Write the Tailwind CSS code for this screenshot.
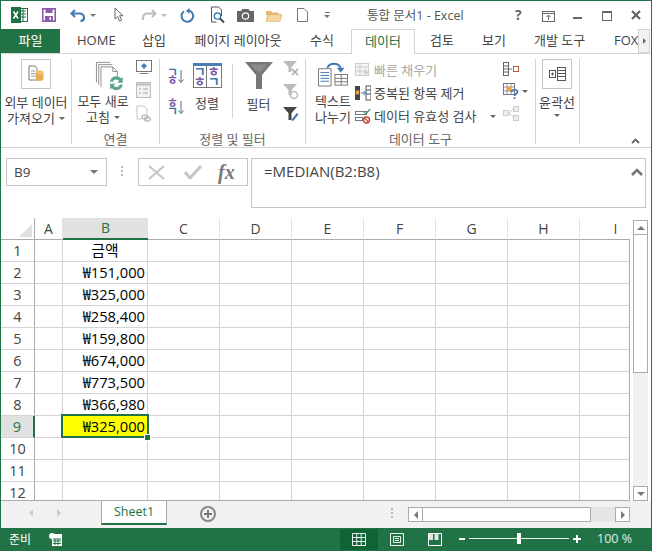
<!DOCTYPE html>
<html lang="ko">
<head>
<meta charset="UTF-8">
<title>통합 문서1 - Excel</title>
<script src="https://cdn.jsdelivr.net/npm/@tailwindcss/browser@4"></script>
</head>
<body class="w-[652px] h-[551px] overflow-hidden bg-white font-['Open_Sans','Noto_Sans_CJK_KR',sans-serif] text-[#444]">
<div class="w-full h-full flex flex-col border-x border-[#217346] border-t">

  <!-- title bar -->
  <div class="h-[28px] flex items-center shrink-0 relative">
    <svg class="ml-[10px] w-[17px] h-[16px]" viewBox="0 0 17 16"><rect x="6" y="1.5" width="10.5" height="13" fill="#fff" stroke="#217346"/><path d="M9 4h6M9 7h6M9 10h6M12 2v12" stroke="#217346"/><rect x="0" y="0" width="10" height="16" fill="#1e7145"/><path d="M2.5 4.5l4.5 7M7 4.5l-4.5 7" stroke="#fff" stroke-width="1.6"/></svg>
    <svg class="ml-[14px] w-[14px] h-[14px]" viewBox="0 0 14 14"><rect x=".8" y=".8" width="12.4" height="12.4" fill="none" stroke="#8a5ba6" stroke-width="1.6"/><rect x="3.5" y="1" width="7" height="4" fill="#8a5ba6"/><rect x="3" y="8" width="8" height="5" fill="#8a5ba6"/><rect x="7.5" y="9" width="1.5" height="3" fill="#fff"/></svg>
    <svg class="ml-[14px] w-[16px] h-[14px]" viewBox="0 0 16 14"><path d="M5 2L1.500 5.500 5 9" fill="none" stroke="#3f78b3" stroke-width="2"/><path d="M2 5.500h8a4 4 0 0 1 4 4c0 2-1.500 3.500-3.500 3.500" fill="none" stroke="#3f78b3" stroke-width="2.200"/></svg>
    <span class="ml-[4px] w-0 h-0 border-x-[3px] border-x-transparent border-t-[3px] border-t-[#777]"></span>
    <svg class="ml-[18px] w-[10px] h-[16px]" viewBox="0 0 10 16"><path d="M1 1v11l2.600-2.400L5.600 14l2-1-2-4.300H9z" fill="#fff" stroke="#666"/></svg>
    <svg class="ml-[17px] w-[16px] h-[14px]" viewBox="0 0 16 14"><path d="M11 2l3.500 3.500L11 9" fill="none" stroke="#bdbdbd" stroke-width="2"/><path d="M14 5.500H6a4 4 0 0 0-4 4V12" fill="none" stroke="#bdbdbd" stroke-width="2.200"/></svg>
    <span class="ml-[4px] w-0 h-0 border-x-[3px] border-x-transparent border-t-[3px] border-t-[#bbb]"></span>
    <svg class="ml-[13px] w-[15px] h-[15px]" viewBox="0 0 15 15"><path d="M4 3.200A5.800 5.800 0 1 0 9 2.400" fill="none" stroke="#3f78b3" stroke-width="2"/><path d="M9.500 0v6L6 3z" fill="#3f78b3"/></svg>
    <svg class="ml-[15px] w-[15px] h-[18px]" viewBox="0 0 15 18"><path d="M1.500 1h7l3 3v6M1.500 1v15h5" fill="none" stroke="#555"/><circle cx="7.500" cy="10" r="3.200" fill="#fff" stroke="#2f6f9f" stroke-width="1.300"/><path d="M10 12.500l4 4" stroke="#444" stroke-width="1.800"/></svg>
    <svg class="ml-[12px] w-[17px] h-[14px]" viewBox="0 0 17 14"><path d="M0 3h4l1.500-2h6L13 3h4v11H0z" fill="#666"/><circle cx="8.500" cy="8" r="3.200" fill="#666" stroke="#fff" stroke-width="1.200"/></svg>
    <svg class="ml-[12px] w-[16px] h-[13px]" viewBox="0 0 16 13"><path d="M0 2h5l1.500 1.500h6V6H0z" fill="#e5b877"/><path d="M0 13l2-7.500h14l-2.500 7.500z" fill="#f3d6a0" stroke="#e5b877"/></svg>
    <svg class="ml-[15px] w-[11px] h-[14px]" viewBox="0 0 11 14"><path d="M.5.500h6.500l3.500 3.500v9.500H.5z" fill="#fff" stroke="#777"/></svg>
    <span class="ml-[16px] flex flex-col items-center gap-[2px]"><span class="w-[5px] h-px bg-[#777]"></span><span class="w-0 h-0 border-x-[3px] border-x-transparent border-t-[3px] border-t-[#777]"></span></span>
    <span class="absolute left-[366px] top-[5px] text-[12.500px] leading-[20px] text-[#555]">통합 문서1 - Excel</span>
    <span class="absolute left-[514px] top-[4px] text-[14px] leading-[20px] font-bold text-[#666]">?</span>
    <svg class="absolute left-[541px] top-[10px] w-[13px] h-[11px]" viewBox="0 0 13 11"><rect x=".5" y=".5" width="12" height="10" fill="none" stroke="#666"/><path d="M1 2.500h11M6.500 9V4.500M4.500 6l2-2 2 2" fill="none" stroke="#666"/></svg>
    <span class="absolute left-[572px] top-[16px] w-[9px] h-[2px] bg-[#666]"></span>
    <span class="absolute left-[601px] top-[10px] w-[10px] h-[10px] border border-t-2 border-[#666]"></span>
    <svg class="absolute left-[630px] top-[9px] w-[10px] h-[10px]" viewBox="0 0 10 10"><path d="M1 1l8 8M9 1l-8 8" stroke="#666" stroke-width="2.200"/></svg>
  </div>

  <!-- tabs -->
  <div class="h-[25px] flex shrink-0 border-b border-[#d4d4d4] text-[13px] leading-[23px] text-[#444] whitespace-nowrap relative">
    <div class="w-[59px] h-[24px] bg-[#217346] text-white text-center">파일</div>
    <div class="ml-[17px] w-[36px] text-center">HOME</div>
    <div class="ml-[29px] w-[24px] text-center">삽입</div>
    <div class="ml-[28px] w-[88px] text-center">페이지 레이아웃</div>
    <div class="ml-[28px] w-[24px] text-center">수식</div>
    <div class="ml-[17px] w-[64px] h-[25px] bg-white border border-b-0 border-[#d4d4d4] text-[#217346] text-center">데이터</div>
    <div class="ml-[15px] w-[24px] text-center">검토</div>
    <div class="ml-[28px] w-[24px] text-center">보기</div>
    <div class="ml-[28px] w-[51px] text-center">개발 도구</div>
    <div class="ml-[29px] w-[22px]">FOX</div>
    <div class="absolute left-[637px] top-0 w-[12px] h-[24px] bg-[#f3f3f3] border border-[#d4d4d4] flex items-center justify-center"><span class="w-0 h-0 border-y-[3px] border-y-transparent border-l-[3px] border-l-[#666]"></span></div>
  </div>

  <!-- ribbon -->
  <div class="h-[94px] flex shrink-0 border-b border-[#d4d4d4] text-[13px] leading-[16px] text-[#444] pt-[5px] relative whitespace-nowrap">
    <!-- external data -->
    <div class="w-[71px] h-[85px] border-r border-[#d4d4d4] flex flex-col items-center shrink-0">
      <div class="w-[30px] h-[30px] border border-[#c6c6c6] flex items-center justify-center">
        <svg class="w-[16px] h-[18px]" viewBox="0 0 16 18"><path d="M1 1h6l2 2v12H1z" fill="#fff" stroke="#777"/><path d="M3 6h4M3 8.500h4M3 11h4" stroke="#999"/><ellipse cx="11.500" cy="7" rx="4" ry="1.800" fill="#f0c36d"/><path d="M7.500 7v7c0 1 1.800 2 4 2s4-1 4-2V7c0 1-1.800 2-4 2s-4-1-4-2z" fill="#e5ae4f"/></svg>
      </div>
      <div class="mt-[5px] text-center">외부 데이터</div>
      <div class="flex items-center gap-[4px]">가져오기<span class="w-0 h-0 border-x-[3px] border-x-transparent border-t-[3px] border-t-[#666]"></span></div>
    </div>
    <!-- connections -->
    <div class="w-[88px] h-[85px] border-r border-[#d4d4d4] flex flex-col shrink-0">
      <div class="flex h-[66px] shrink-0">
        <div class="w-[62px] flex flex-col items-center">
          <svg class="mt-[2px] ml-[14px] w-[33px] h-[32px]" viewBox="0 0 33 32"><path d="M1 23.500V1.500h15M3.500 26V4h15M6 28.500V6.500h13l5 5v7" fill="#fff" stroke="#888"/><path d="M19 6.500v5h5" fill="none" stroke="#888"/><path d="M16 23a7 7 0 0 1 12-4l2-1v6h-6l2-2a4 4 0 0 0-7 1zM30 26a7 7 0 0 1-12 4l-2 1v-6h6l-2 2a4 4 0 0 0 7-1z" fill="#5fa58a"/></svg>
          <div class="mt-[3px]">모두 새로</div>
          <div class="flex items-center gap-[4px]">고침<span class="w-0 h-0 border-x-[3px] border-x-transparent border-t-[3px] border-t-[#666]"></span></div>
        </div>
        <div class="ml-[2px] pt-[1px] flex flex-col gap-[7px]">
          <svg class="w-[16px] h-[15px]" viewBox="0 0 16 15"><rect x=".5" y=".5" width="15" height="11" fill="#fff" stroke="#777"/><path d="M4 13.500h8" stroke="#777"/><path d="M8 3l3 3-3 3-3-3z" fill="#4a7fb5"/></svg>
          <svg class="w-[15px] h-[16px]" viewBox="0 0 15 16"><rect x=".5" y=".5" width="14" height="15" fill="#f2f2f2" stroke="#bbb"/><path d="M1 2.500h13" stroke="#bbb" stroke-width="2"/><path d="M7 7h5M7 11h5M3 7h2M3 11h2" stroke="#aaa"/></svg>
          <svg class="w-[15px] h-[17px]" viewBox="0 0 15 17"><path d="M1 1h7l3 3v5M1 1v13h5" fill="#fff" stroke="#c4c4c4"/><ellipse cx="9" cy="12" rx="3" ry="2" fill="none" stroke="#bbb" stroke-width="1.400"/><ellipse cx="11.500" cy="14" rx="3" ry="2" fill="none" stroke="#bbb" stroke-width="1.400"/></svg>
        </div>
      </div>
      <div class="mt-[6px] text-center text-[#666]">연결</div>
    </div>
    <!-- sort & filter -->
    <div class="w-[146px] h-[85px] border-r border-[#d4d4d4] flex flex-col shrink-0">
      <div class="flex h-[66px] shrink-0">
        <div class="ml-[7px] mt-[9px] w-[18px] shrink-0 flex flex-col gap-[14px]">
          <div class="flex items-center h-[17px]">
            <div class="flex flex-col text-[12px] leading-[8px] font-bold"><span class="text-[#3f78b3]">ㄱ</span><span class="text-[#7a5aa6]">ㅎ</span></div>
            <svg class="w-[6px] h-[15px]" viewBox="0 0 6 15"><path d="M3 1v12M.5 10.500L3 13.500l2.500-3" fill="none" stroke="#666"/></svg>
          </div>
          <div class="flex items-center h-[17px]">
            <div class="flex flex-col text-[12px] leading-[8px] font-bold"><span class="text-[#7a5aa6]">ㅎ</span><span class="text-[#3f78b3]">ㄱ</span></div>
            <svg class="w-[6px] h-[15px]" viewBox="0 0 6 15"><path d="M3 1v12M.5 10.500L3 13.500l2.500-3" fill="none" stroke="#666"/></svg>
          </div>
        </div>
        <div class="ml-[7px] w-[30px] shrink-0 flex flex-col items-center">
          <div class="mt-[4px] w-[29px] h-[25px] border border-[#777] border-t-[3px] border-t-[#4a7fb5] grid grid-cols-2 text-[13px] leading-[10px] text-center font-bold">
            <span class="border-r border-[#777] flex flex-col"><span class="text-[#3f78b3]">ㄱ</span><span class="text-[#7a5aa6]">ㅎ</span></span>
            <span class="flex flex-col"><span class="text-[#7a5aa6]">ㅎ</span><span class="text-[#3f78b3]">ㄱ</span></span>
          </div>
          <div class="mt-[7px]">정렬</div>
        </div>
        <div class="ml-[10px] mt-[5px] w-px h-[54px] bg-[#d4d4d4]"></div>
        <div class="ml-[11px] w-[29px] flex flex-col items-center">
          <svg class="mt-[3px] w-[28px] h-[27px]" viewBox="0 0 28 27"><path d="M0 0h28L17 13v14h-6V13z" fill="#777"/><path d="M6 2.500h16l-7 8h-2z" fill="#8c8c8c"/></svg>
          <div class="mt-[7px]">필터</div>
        </div>
        <div class="ml-[10px] pt-[1px] flex flex-col gap-[6px]">
          <svg class="w-[16px] h-[17px]" viewBox="0 0 16 17"><path d="M0 1h14L8.500 7v5h-3V7z" fill="#bbb"/><path d="M9 9l6 6M15 9l-6 6" stroke="#aaa" stroke-width="1.600"/></svg>
          <svg class="w-[16px] h-[17px]" viewBox="0 0 16 17"><path d="M0 1h14L8.500 7v5h-3V7z" fill="#bbb"/><circle cx="11" cy="12" r="3.500" fill="none" stroke="#bbb" stroke-width="1.500"/></svg>
          <svg class="w-[16px] h-[16px]" viewBox="0 0 16 16"><path d="M0 1h14L8.500 7v7h-3V7z" fill="#444"/><path d="M9 13l5-6 1.500 1.500-5 6-2 .5z" fill="#3f78b3"/></svg>
        </div>
      </div>
      <div class="mt-[6px] text-center text-[#666]">정렬 및 필터</div>
    </div>
    <!-- data tools -->
    <div class="w-[230px] h-[85px] border-r border-[#d4d4d4] flex flex-col shrink-0">
      <div class="flex h-[66px] shrink-0">
        <div class="ml-[5px] w-[44px] shrink-0 flex flex-col items-center">
          <svg class="mt-[2px] w-[32px] h-[28px]" viewBox="0 0 32 28"><path d="M1 8h13v18H1z" fill="#fff" stroke="#777"/><path d="M3 12h9M3 15h9M3 18h9M3 21h9" stroke="#3f78b3"/><path d="M10 7a8 8 0 0 1 14 0" fill="none" stroke="#3f78b3" stroke-width="2"/><path d="M20 7h8l-4 5z" fill="#3f78b3"/><rect x="18" y="14" width="13" height="11" fill="#fff" stroke="#777"/><path d="M18 18h13M18 21.500h13M24.500 14v11" stroke="#777"/></svg>
          <div class="mt-[5px]">텍스트</div>
          <div>나누기</div>
        </div>
        <div class="pt-[3px] flex flex-col gap-[7px]">
          <div class="flex items-center gap-[3px] text-[#aaa]"><svg class="w-[16px] h-[16px]" viewBox="0 0 16 16"><rect x=".5" y="1.500" width="13" height="12" fill="#f4f4f4" stroke="#ccc"/><path d="M1 5h12M1 9h12M5 2v11" stroke="#ccc"/><path d="M11 7l-3 4h2.500l-1 4 4-5h-2.500z" fill="#ccc"/></svg>빠른 채우기</div>
          <div class="flex items-center gap-[3px]"><svg class="w-[16px] h-[16px]" viewBox="0 0 16 16"><rect x="0" y="1" width="5" height="14" fill="#444"/><rect x=".8" y="5.500" width="3.400" height="4" fill="#e8a33d"/><rect x="11" y="1" width="5" height="14" fill="#fff" stroke="#555"/><path d="M11 5h5M11 9h5" stroke="#555"/><path d="M6 8h4M8.500 6l2 2-2 2" fill="none" stroke="#3f78b3"/></svg>중복된 항목 제거</div>
          <div class="flex items-center gap-[3px]"><svg class="w-[16px] h-[16px]" viewBox="0 0 16 16"><rect x=".5" y="3.500" width="11" height="3" fill="#fff" stroke="#777"/><rect x=".5" y="9.500" width="7" height="3" fill="#fff" stroke="#777"/><path d="M9 4l2 2 4-5" fill="none" stroke="#4f9d7a" stroke-width="1.400"/><circle cx="11.500" cy="12" r="3" fill="#fff" stroke="#c8452d" stroke-width="1.400"/><path d="M9.500 10l4 4" stroke="#c8452d" stroke-width="1.200"/></svg>데이터 유효성 검사<span class="ml-[11px] w-0 h-0 border-x-[3px] border-x-transparent border-t-[3px] border-t-[#666]"></span></div>
        </div>
        <div class="ml-[7px] pt-[2px] flex flex-col gap-[6px]">
          <svg class="w-[16px] h-[16px]" viewBox="0 0 16 16"><rect x=".5" y="1.500" width="5" height="13" fill="#fff" stroke="#666"/><path d="M1 5h4M1 8h4M1 11h4" stroke="#666"/><path d="M6 8h3" stroke="#3f78b3"/><rect x="10.500" y="5.500" width="5" height="5" fill="#fff" stroke="#b9583c"/></svg>
          <div class="flex items-center gap-[3px]"><svg class="w-[16px] h-[16px]" viewBox="0 0 16 16"><rect x=".5" y=".5" width="11" height="11" fill="#fff" stroke="#777"/><path d="M1 4h10M1 8h10M4 1v10M8 1v10" stroke="#999"/><rect x="4" y="4" width="4" height="4" fill="#e8a33d"/><path d="M8.500 9c0-3 6-3 6 0 0 2-3 2-3 4M11.500 14.200v1.800" fill="none" stroke="#3f78b3" stroke-width="1.700"/></svg><span class="w-0 h-0 border-x-[3px] border-x-transparent border-t-[3px] border-t-[#666]"></span></div>
          <svg class="w-[16px] h-[16px]" viewBox="0 0 16 16"><rect x=".5" y="5.500" width="5" height="5" fill="#eee" stroke="#ccc"/><rect x="10.500" y="1.500" width="5" height="5" fill="#eee" stroke="#ccc"/><rect x="10.500" y="10.500" width="5" height="5" fill="#eee" stroke="#ccc"/><path d="M6 8l4-4M6 8l4 4" stroke="#ccc"/></svg>
        </div>
      </div>
      <div class="mt-[6px] text-center text-[#666]">데이터 도구</div>
    </div>
    <!-- outline -->
    <div class="w-[44px] h-[85px] pr-px border-r border-[#d4d4d4] flex flex-col items-center shrink-0">
      <div class="w-[30px] h-[30px] border border-[#c6c6c6] flex items-center justify-center">
        <svg class="w-[17px] h-[14px]" viewBox="0 0 17 14"><rect x=".5" y="3.500" width="6" height="7" fill="#fff" stroke="#555"/><path d="M2 7h3M3.500 5.500v3" stroke="#555"/><rect x="8.500" y=".5" width="8" height="13" fill="#fff" stroke="#555"/><path d="M9 3.500h7M9 6.500h7M9 9.500h7" stroke="#555"/></svg>
      </div>
      <div class="mt-[5px]">윤곽선</div>
      <span class="mt-[4px] w-0 h-0 border-x-[3px] border-x-transparent border-t-[3px] border-t-[#666]"></span>
    </div>
    <svg class="absolute left-[630px] top-[84px] w-[9px] h-[6px]" viewBox="0 0 9 6"><path d="M1 5l3.500-3.500L8 5" fill="none" stroke="#666" stroke-width="1.800"/></svg>
  </div>

  <!-- formula bar -->
  <div class="h-[70px] shrink-0 pl-[5px] pt-[10px] flex items-start">
    <div class="w-[101px] h-[28px] border border-[#c6c6c6] flex items-center justify-between px-[7px] text-[13.500px] text-[#444]">B9<span class="mr-[1px] w-0 h-0 border-x-[4px] border-x-transparent border-t-[4px] border-t-[#777]"></span></div>
    <div class="ml-[13px] mt-[8px] w-[4px] flex flex-col items-center gap-[2px]"><span class="w-[2px] h-[2px] bg-[#bbb]"></span><span class="w-[2px] h-[2px] bg-[#bbb]"></span><span class="w-[2px] h-[2px] bg-[#bbb]"></span></div>
    <div class="ml-[14px] w-[110px] h-[28px] border border-[#c6c6c6] flex items-center">
      <svg class="ml-[9px] w-[17px] h-[15px]" viewBox="0 0 17 15"><path d="M1 1l15 13M16 1L1 14" stroke="#c6c6c6" stroke-width="2.200"/></svg>
      <svg class="ml-[19px] w-[18px] h-[14px]" viewBox="0 0 18 14"><path d="M1 7l5 6L17 1" fill="none" stroke="#c6c6c6" stroke-width="3"/></svg>
      <span class="ml-[16px] font-['Liberation_Serif',serif] italic font-bold text-[20px] leading-[20px] text-[#777]">fx</span>
    </div>
    <div class="ml-[3px] w-[395px] h-[50px] border border-[#c6c6c6] relative pl-[12px] text-[15px] leading-[25px] text-[#444]">=MEDIAN(B2:B8)
      <svg class="absolute right-[2px] top-[9px] w-[12px] h-[9px]" viewBox="0 0 12 9"><path d="M1 7l5-5 5 5" fill="none" stroke="#777" stroke-width="2.600"/></svg>
    </div>
  </div>

  <!-- sheet -->
  <div class="h-[283px] shrink-0 flex overflow-hidden">
    <div class="w-[629px] h-[283px] relative border-b border-[#ababab] overflow-hidden shrink-0">
      <div id="cells" class="grid grid-cols-[34px_28px_85px_72px_72px_72px_72px_72px_72px_72px] auto-rows-[22px]"></div>
      <!-- right edge of the cell area -->
      <span class="absolute right-0 top-[21px] bottom-0 w-px bg-[#ababab]"></span>
      <!-- selected cell -->
      <div class="absolute left-[60px] top-[196px] w-[88px] h-[24px] border-2 border-[#217346]">
        <span class="absolute -right-[4px] -bottom-[5px] w-[5px] h-[5px] bg-[#217346] border border-white box-content"></span>
      </div>
    </div>
    <!-- vertical scrollbar -->
    <div class="w-[19px] h-[283px] pl-[3px] pt-[2px] flex flex-col shrink-0">
      <div class="w-[15px] h-[281px] bg-[#f1f1f1] flex flex-col">
        <div class="h-[15px] border border-[#ababab] bg-white flex items-center justify-center"><span class="w-0 h-0 border-x-[4px] border-x-transparent border-b-[4px] border-b-[#777]"></span></div>
        <div class="h-[138px] border-x border-b border-[#ababab] bg-white"></div>
        <div class="flex-1"></div>
        <div class="h-[15px] border border-[#ababab] bg-white flex items-center justify-center"><span class="w-0 h-0 border-x-[4px] border-x-transparent border-t-[4px] border-t-[#777]"></span></div>
      </div>
    </div>
  </div>

  <!-- sheet tabs -->
  <div class="h-[27px] shrink-0 bg-[#f1f1f1] flex items-start relative">
    <span class="ml-[28px] mt-[8px] w-0 h-0 border-y-[4px] border-y-transparent border-r-[4px] border-r-[#ccc]"></span>
    <span class="ml-[24px] mt-[8px] w-0 h-0 border-y-[4px] border-y-transparent border-l-[4px] border-l-[#ccc]"></span>
    <div class="ml-[40px] -mt-px w-[66px] h-[25px] bg-white border-x border-t border-[#ababab] border-b-2 border-b-[#217346] text-center text-[12.500px] leading-[22px] text-[#217346]">Sheet1</div>
    <div class="ml-[33px] mt-[5px] w-[16px] h-[16px] rounded-full border-2 border-[#888] flex items-center justify-center">
      <svg class="w-[8px] h-[8px]" viewBox="0 0 8 8"><path d="M4 0v8M0 4h8" stroke="#777" stroke-width="1.800"/></svg>
    </div>
    <div class="absolute left-[390px] top-[7px] flex flex-col gap-[2px]"><span class="w-[2px] h-[2px] bg-[#bbb]"></span><span class="w-[2px] h-[2px] bg-[#bbb]"></span><span class="w-[2px] h-[2px] bg-[#bbb]"></span></div>
    <div class="absolute left-[407px] top-[6px] w-[222px] h-[15px] flex">
      <div class="w-[15px] border border-[#ababab] bg-white flex items-center justify-center"><span class="w-0 h-0 border-y-[4px] border-y-transparent border-r-[4px] border-r-[#777]"></span></div>
      <div class="w-[168px] border-y border-r border-[#ababab] bg-white"></div>
      <div class="flex-1 bg-[#e6e6e6]"></div>
      <div class="w-[15px] border border-[#ababab] bg-white flex items-center justify-center"><span class="w-0 h-0 border-y-[4px] border-y-transparent border-l-[4px] border-l-[#777]"></span></div>
    </div>
  </div>

  <!-- status bar -->
  <div class="h-[23px] shrink-0 -mx-px bg-[#217346] text-white/85 text-[12px] flex items-center relative">
    <span class="ml-[9px] text-white">준비</span>
    <svg class="ml-[18px] w-[13px] h-[13px]" viewBox="0 0 13 13"><circle cx="3" cy="3" r="3" fill="#fff"/><rect x="3" y="1" width="10" height="12" fill="#fff"/><path d="M4 6h8M4 8h8M4 10.500h8M6 6v6M9 6v6" stroke="#217346"/></svg>
    <div class="absolute left-[340px] top-px w-[38px] h-[21px] bg-[#0f6435] flex items-center justify-center">
      <svg class="w-[14px] h-[13px]" viewBox="0 0 14 13"><path d="M.5.500h13v12H.5zM.5 4.500h13M.5 8.500h13M4.800.500v12M9.200.500v12" fill="none" stroke="#fff" opacity=".9"/></svg>
    </div>
    <svg class="absolute left-[390px] top-[5px] w-[14px] h-[13px]" viewBox="0 0 14 13"><path d="M.5.500h13v12H.5z" fill="none" stroke="#fff" opacity=".9"/><path d="M3.500 3.500h7v6h-7zM5 5.500h4M5 7.500h4" fill="none" stroke="#fff" opacity=".9"/></svg>
    <svg class="absolute left-[428px] top-[5px] w-[14px] h-[13px]" viewBox="0 0 14 13"><path d="M.5.500h13v12H.5z" fill="none" stroke="#fff"/><rect x="1" y="1" width="4" height="6" fill="#fff" opacity=".85"/><rect x="6.500" y="1" width="4" height="6" fill="#fff" opacity=".85"/></svg>
    <span class="absolute left-[459px] top-[10px] w-[6px] h-[2px] bg-white"></span>
    <span class="absolute left-[469px] top-[10px] w-[100px] h-px bg-white/90"></span>
    <span class="absolute left-[517px] top-[5px] w-[4px] h-[11px] bg-white"></span>
    <svg class="absolute left-[573px] top-[7px] w-[8px] h-[8px]" viewBox="0 0 8 8"><path d="M4 0v8M0 4h8" stroke="#fff" stroke-width="2"/></svg>
    <span class="absolute left-[597px] top-0 text-[12.500px] leading-[22px]">100 %</span>
  </div>
</div>

<script>
  // build the worksheet
  var cols = ['A','B','C','D','E','F','G','H','I'];
  var vals = ['금액','₩151,000','₩325,000','₩258,400','₩159,800','₩674,000','₩773,500','₩366,980','₩325,000'];
  var base = 'text-[14.700px] leading-[21px] whitespace-nowrap ';
  var html = '<div class="h-[22px] border-b border-r border-[#ababab] flex items-end justify-end pr-[2px] pb-[2px]"><span class="w-0 h-0 border-l-[13px] border-l-transparent border-b-[13px] border-b-[#e0e0e0]"></span></div>';
  cols.forEach(function (c) {
    if (c === 'B') {
      html += '<div class="h-[22px] bg-[#e1e1e1] border-b-2 border-[#217346] text-center text-[14px] leading-[20px] text-[#217346]">B</div>';
    } else {
      html += '<div class="h-[22px] border-b border-b-[#ababab] border-r border-r-[#e4e4e4] text-center text-[14px] leading-[21px] text-[#444]">' + c + '</div>';
    }
  });
  for (var r = 1; r <= 12; r++) {
    var head = r === 9
      ? 'bg-[#e1e1e1] border-r-2 border-[#217346] text-[#217346]'
      : 'border-r border-[#ababab] text-[#444]';
    html += '<div class="h-[22px] border-b border-b-[#d4d4d4] ' + head + ' text-center text-[14.500px] leading-[21px]">' + r + '</div>';
    cols.forEach(function (c) {
      var cell = 'h-[22px] border-r border-b border-[#d4d4d4] ' + base;
      if (c === 'B' && r <= 9) {
        var align = r === 1 ? 'text-center text-black' : 'text-right pr-[2px] text-black';
        if (r === 9) align += ' bg-[#ffff00]';
        html += '<div class="' + cell + align + '">' + vals[r - 1] + '</div>';
      } else {
        html += '<div class="' + cell + '"></div>';
      }
    });
  }
  document.getElementById('cells').innerHTML = html;
</script>
</body>
</html>
